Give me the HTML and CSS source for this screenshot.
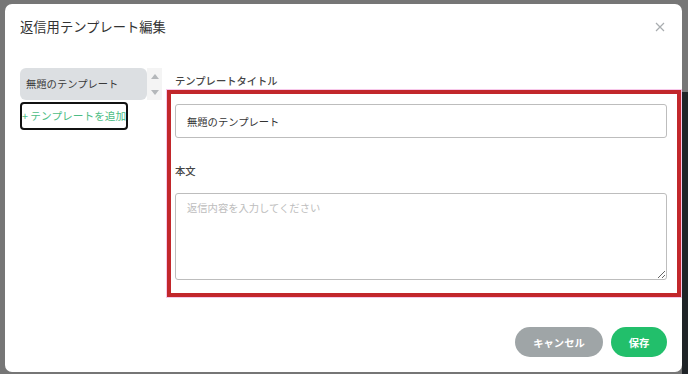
FILE: index.html
```html
<!DOCTYPE html>
<html lang="ja">
<head>
<meta charset="utf-8">
<title>返信用テンプレート編集</title>
<link rel="stylesheet" href="styles.css">
</head>
<body>
<div class="backdrop-strip"></div>
<div class="modal">
  <div class="modal-header">
    <h1 class="modal-title">返信用テンプレート編集</h1>
    <button class="close-btn" aria-label="閉じる">
      <svg width="10" height="10" viewBox="0 0 10 10"><path d="M1 1L9 9M9 1L1 9" stroke="#a9adb0" stroke-width="1.2" fill="none"/></svg>
    </button>
  </div>
  <div class="modal-body">
    <aside class="sidebar">
      <div class="list">
        <div class="list-item">無題のテンプレート</div>
        <div class="scrollbar">
          <svg width="8" height="6" viewBox="0 0 8 6"><path d="M0 6L4 1L8 6Z" fill="#b5b8bb"/></svg>
          <svg width="8" height="6" viewBox="0 0 8 6"><path d="M0 0L4 5L8 0Z" fill="#b5b8bb"/></svg>
        </div>
      </div>
      <button class="add-btn">+ テンプレートを追加</button>
    </aside>
    <section class="form">
      <label class="field-label">テンプレートタイトル</label>
      <input class="text-input" type="text" value="無題のテンプレート">
      <label class="field-label body-label">本文</label>
      <textarea class="text-area" placeholder="返信内容を入力してください"></textarea>
    </section>
  </div>
  <div class="modal-footer">
    <button class="btn btn-cancel">キャンセル</button>
    <button class="btn btn-save">保存</button>
  </div>
  <div class="highlight-box"></div>
</div>
</body>
</html>
```

FILE: styles.css
```css
* { box-sizing: border-box; }

html, body {
  margin: 0;
  height: 100%;
}

body {
  background: #767676;
  padding: 4px 6px 2px 5px;
  font-family: "Noto Sans CJK JP", "Noto Sans", sans-serif;
  position: relative;
  overflow: hidden;
}

.backdrop-strip {
  position: absolute;
  right: 0;
  top: 92px;
  width: 6px;
  bottom: 0;
  background: #1f2427;
}

.modal {
  position: relative;
  width: 677px;
  height: 368px;
  background: #fff;
  border-radius: 7px;
  padding: 0 15px;
  display: flex;
  flex-direction: column;
}

.modal-header {
  height: 50px;
  padding-top: 13px;
  display: flex;
  justify-content: space-between;
  align-items: flex-start;
}

.modal-title {
  margin: 0;
  font-size: 13.3px;
  font-weight: 400;
  line-height: 20px;
  color: #333;
}

.close-btn {
  border: 0;
  background: none;
  padding: 0;
  margin: 5px 2px 0 0;
  width: 10px;
  height: 10px;
  display: flex;
}

.modal-body {
  margin-top: 14px;
  display: flex;
  gap: 13px;
  height: 212px;
}

.sidebar {
  width: 142px;
  display: flex;
  flex-direction: column;
  gap: 2px;
}

.list {
  display: flex;
  height: 32px;
}

.list-item {
  width: 127px;
  background: #dcdfe2;
  border-radius: 6px;
  font-size: 10.3px;
  color: #3a3a3a;
  line-height: 32px;
  padding-left: 6px;
}

.scrollbar {
  width: 15px;
  background: #f4f4f4;
  display: flex;
  flex-direction: column;
  justify-content: space-between;
  align-items: center;
  padding: 5px 0 4px;
}

.add-btn {
  width: 108px;
  height: 28px;
  border: 2px solid #111;
  border-radius: 4px;
  background: #fff;
  padding: 0;
  text-align: left;
  white-space: nowrap;
  overflow: hidden;
  font-family: inherit;
  font-size: 10.7px;
  color: #4dbd85;
  line-height: 24px;
}

.form {
  flex: 1;
  display: flex;
  flex-direction: column;
}

.field-label {
  font-size: 10.3px;
  font-weight: 500;
  color: #444;
  line-height: 16px;
  padding-top: 5px;
  margin-bottom: 15px;
}

.body-label {
  padding-top: 0;
  margin-top: 25px;
  margin-bottom: 14px;
}

.text-input {
  height: 34px;
  border: 1px solid #bdbdbd;
  border-radius: 3px;
  padding: 0 11px;
  font-family: inherit;
  font-size: 10.3px;
  color: #333;
  outline: none;
}

.text-area {
  height: 87px;
  border: 1px solid #bdbdbd;
  border-radius: 3px;
  padding: 6px 11px;
  font-family: inherit;
  font-size: 10.3px;
  color: #333;
  resize: vertical;
  outline: none;
}

.text-area::placeholder { color: #bdbdbd; }

.modal-footer {
  margin-top: auto;
  margin-bottom: 15px;
  display: flex;
  justify-content: flex-end;
  gap: 8px;
}

.btn {
  height: 30px;
  border: 0;
  border-radius: 15px;
  color: #fff;
  font-family: inherit;
  font-size: 10.3px;
  font-weight: 700;
  padding: 0;
}

.btn-cancel {
  width: 88px;
  background: #9fa5a7;
}

.btn-save {
  width: 56px;
  background: #22bf6b;
}

.highlight-box {
  position: absolute;
  left: 162px;
  top: 86px;
  width: 514px;
  height: 207px;
  border: 4px solid #c2272b;
  box-shadow: 0 0 0 1px #f7c8ea;
  pointer-events: none;
}
```
